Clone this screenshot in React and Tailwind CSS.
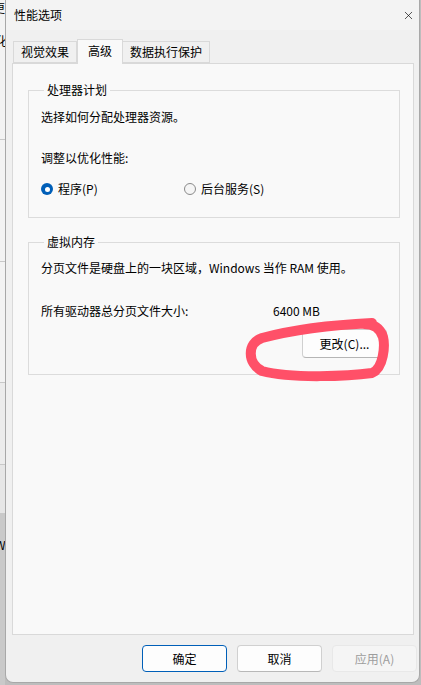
import { X } from "lucide-react";

const font = { fontFamily: '"Noto Sans CJK SC", "Noto Sans", sans-serif' };

const Tab = ({ label, active }) =>
    active ? (
        <div className="h-[25px] px-[10px] -mb-px border border-b-0 border-[#d9d9d9] bg-[#f9f9f9] flex items-start pt-[3px] relative z-10">
            {label}
        </div>
    ) : (
        <div className="h-[22px] px-[7px] border border-[#d9d9d9] -ml-px first:ml-0 bg-[#f0f0f0] flex items-center">
            {label}
        </div>
    );

const Group = ({ title, children, className }) => (
    <fieldset className={"border border-[#dcdcdc] ml-[15px] mr-[13px] px-[12px] " + className}>
        <legend className="ml-[3px] px-[3px] leading-[16px]">{title}</legend>
        {children}
    </fieldset>
);

const Radio = ({ checked, label }) => (
    <div className="flex items-center gap-[5px] h-[16px]">
        {checked ? (
            <span className="w-[12px] h-[12px] rounded-full bg-[#005fb8] flex items-center justify-center">
                <span className="w-[5px] h-[5px] rounded-full bg-white" />
            </span>
        ) : (
            <span className="w-[12px] h-[12px] rounded-full border border-[#8a8a8a] bg-[#f5f5f5]" />
        )}
        <span>{label}</span>
    </div>
);

const DialogButton = ({ label, variant }) => {
    const styles = {
        primary: "border-[#005fb8] bg-[#fdfdfd] text-black",
        normal: "border-[#d0d0d0] border-b-[#b8b8b8] bg-[#fdfdfd] text-black",
        disabled: "border-[#e8e8e8] bg-[#f5f5f5] text-[#9d9d9d]",
    };
    return (
        <div className={"w-[85px] h-[27px] rounded-[4px] border flex items-center justify-center " + styles[variant]}>
            {label}
        </div>
    );
};

// edge of the window behind the dialog
const BackStrip = () => (
    <div className="w-[5px] h-full flex flex-col overflow-hidden text-[12px] leading-[16px] text-black">
        <div className="h-[140px] bg-[#f3f3f3] border-b border-[#c8c8c8] relative">
            <span className="absolute left-[-7px] top-0">更</span>
            <span className="absolute left-[-4px] top-[33px]">化</span>
        </div>
        <div className="h-[122px] bg-[#f3f3f3] border-b border-[#c8c8c8] relative">
            <span className="absolute left-[-6px] top-[96px]">J</span>
        </div>
        <div className="h-[121px] bg-[#f3f3f3] border-b border-[#c8c8c8]" />
        <div className="h-[82px] bg-[#ececec] border-b border-[#c8c8c8]" />
        <div className="h-[48px] bg-[#e6e6e6]" />
        <div className="flex-1 bg-[#c9c9c9] relative">
            <span className="absolute left-[-5px] top-[24px]">W</span>
        </div>
    </div>
);

const App = () => {
    return (
        <div className="w-[421px] h-[685px] relative overflow-hidden bg-[#bdbdbd] flex text-[12px] text-black" style={font}>
            <BackStrip />

            <div className="w-[415px] h-[683px] bg-[#f0f0f0] border-l border-r border-b border-[#a8a8a8] rounded-b-[8px] flex flex-col">
                <header className="h-[30px] bg-[#f3f3f3] flex items-center justify-between pl-[8px] pr-[4px]">
                    <span className="leading-[16px]">性能选项</span>
                    <X size={13} strokeWidth={1.2} className="text-black" />
                </header>

                <div className="flex items-end mt-[9px] ml-[7px] leading-[16px]">
                    <Tab label="视觉效果" />
                    <Tab label="高级" active />
                    <Tab label="数据执行保护" />
                </div>

                <section className="ml-[6px] mr-[5px] h-[572px] bg-[#f9f9f9] border border-[#d9d9d9] flex flex-col leading-[16px]">
                    <Group title="处理器计划" className="mt-[18px] pb-[20px]">
                        <p className="mt-[11px]">选择如何分配处理器资源。</p>
                        <p className="mt-[25px]">调整以优化性能:</p>
                        <div className="mt-[15px] flex">
                            <div className="w-[143px]">
                                <Radio checked label="程序(P)" />
                            </div>
                            <Radio label="后台服务(S)" />
                        </div>
                    </Group>

                    <Group title="虚拟内存" className="mt-[16px] pb-[16px]">
                        <p className="mt-[10px]">分页文件是硬盘上的一块区域，Windows 当作 RAM 使用。</p>
                        <div className="mt-[27px] flex">
                            <span className="w-[232px]">所有驱动器总分页文件大小:</span>
                            <span>6400 MB</span>
                        </div>
                        <div className="mt-[10px] flex justify-end">
                            <div className="w-[85px] h-[29px] rounded-[4px] border border-[#d0d0d0] border-b-[#b5b5b5] bg-[#fdfdfd] flex items-center justify-center">
                                更改(C)...
                            </div>
                        </div>
                    </Group>
                </section>

                <footer className="mt-[10px] flex justify-end gap-[10px] pr-[2px] leading-[16px]">
                    <DialogButton label="确定" variant="primary" />
                    <DialogButton label="取消" variant="normal" />
                    <DialogButton label="应用(A)" variant="disabled" />
                </footer>
            </div>

            {/* hand-drawn highlight around the change button */}
            <svg className="absolute inset-0 pointer-events-none" width="421" height="685" viewBox="0 0 421 685">
                <path
                    d="M 372 323 C 330 325, 292 330, 262 338 C 247 343, 247 363, 262 371 C 292 379, 350 376, 372 373 C 384 368, 385 345, 383 337 C 380 327, 372 324, 364 324"
                    fill="none"
                    stroke="#ff5068"
                    strokeWidth="10"
                    strokeLinecap="round"
                    strokeLinejoin="round"
                />
            </svg>
        </div>
    );
};

export default App;
